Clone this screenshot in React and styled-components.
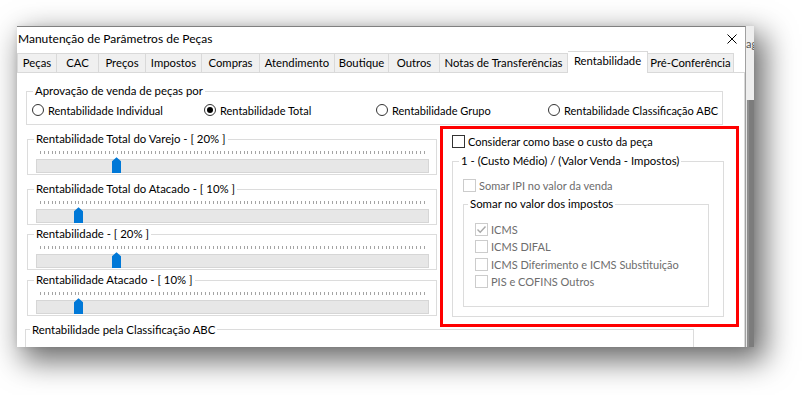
import React from "react";
import styled, { createGlobalStyle } from "styled-components";

const GlobalStyle = createGlobalStyle`
  *, *::before, *::after { box-sizing: border-box; }
  html, body { margin: 0; padding: 0; background: #ffffff; }
  body {
    font-family: "Segoe UI", Lato, "Noto Sans", sans-serif;
    font-size: 11px;
    color: #000;
  }
`;

const Page = styled.div`
  width: 802px;
  height: 395px;
  overflow: hidden;
  padding: 26px 0 0 17px;
  background: #fff;
`;

const Shot = styled.div`
  display: flex;
  width: 737px;
  height: 321px;
  box-shadow: 8px 11px 28px 3px rgba(0, 0, 0, 0.58), 0 0 6px rgba(0, 0, 0, 0.08);
`;

const Window = styled.div`
  width: 729px;
  height: 321px;
  flex: none;
  display: flex;
  flex-direction: column;
  overflow: hidden;
  background: #fff;
  border-top: 1px solid #808080;
  border-right: 1px solid #a0a0a0;
`;

const TitleBar = styled.div`
  height: 25px;
  flex: none;
  display: flex;
  align-items: center;
  justify-content: space-between;
  padding: 0 8px 2px 1px;
  font-size: 12px;
  white-space: nowrap;
`;

const CloseIcon = styled.svg`
  width: 10px;
  height: 10px;
  display: block;
`;

const Backdrop = styled.div`
  width: 8px;
  height: 321px;
  flex: none;
  display: flex;
  flex-direction: column;
  overflow: hidden;
`;

const BackdropTop = styled.div`
  height: 74px;
  flex: none;
  background: #eeeeee;
  color: #555;
  font-size: 11px;
  padding-top: 11px;
  white-space: nowrap;
`;

const BackdropBar = styled.div`
  flex: 1;
  background: linear-gradient(to right, #e4e4e4 0 1px, #8e8e8e 1px 3px, #7c7c7c 3px);
`;

const TabStrip = styled.div`
  height: 20px;
  flex: none;
  display: flex;
  align-items: flex-end;
  position: relative;
  z-index: 1;
`;

const Tab = styled.div`
  flex: none;
  width: ${(p) => p.$w}px;
  height: ${(p) => (p.$active ? 22 : 19)}px;
  margin-bottom: ${(p) => (p.$active ? -1 : 0)}px;
  padding-bottom: ${(p) => (p.$active ? 4 : 1)}px;
  border-top: 1px solid #d9d9d9;
  border-right: 1px solid #d9d9d9;
  border-left: ${(p) => (p.$first ? "1px solid #d9d9d9" : "none")};
  background: ${(p) => (p.$active ? "#ffffff" : "#f0f0f0")};
  display: flex;
  align-items: center;
  justify-content: center;
  font-size: 11.3px;
  white-space: nowrap;
`;

const Panel = styled.div`
  flex: 1;
  border-top: 1px solid #d9d9d9;
  border-right: 1px solid #d9d9d9;
  padding: 11px 0 0 9px;
`;

const Fieldset = styled.fieldset`
  margin: 0;
  padding: 0;
  min-width: 0;
  border: 1px solid #dcdcdc;
  width: ${(p) => p.$w}px;
  margin-top: ${(p) => p.$mt || 0}px;
  margin-left: ${(p) => p.$ml || 0}px;
  height: ${(p) => (p.$h ? `${p.$h}px` : "auto")};
  flex: none;
`;

const Legend = styled.legend`
  padding: 0 2px;
  margin-left: ${(p) => p.$indent}px;
  line-height: 14px;
  height: 14px;
  font-size: 11.4px;
  white-space: nowrap;
  color: #000;
`;

const RadioGrid = styled.div`
  display: grid;
  grid-template-columns: repeat(4, 172px);
  padding: 5px 0 7px 5px;
`;

const RadioItem = styled.label`
  display: flex;
  align-items: center;
  gap: 4px;
  height: 14px;
  white-space: nowrap;
`;

const RadioCircle = styled.span`
  width: 12px;
  height: 12px;
  border-radius: 50%;
  border: 1px solid #333;
  background: #fff;
  flex: none;
  display: flex;
  align-items: center;
  justify-content: center;
  &::after {
    content: "";
    width: 6px;
    height: 6px;
    border-radius: 50%;
    background: #000;
    display: ${(p) => (p.$on ? "block" : "none")};
  }
`;

const BodyRow = styled.div`
  display: flex;
  align-items: flex-start;
  margin-top: 7px;
`;

const LeftCol = styled.div`
  width: 410px;
  margin-left: 1px;
  display: flex;
  flex-direction: column;
`;

const SliderBody = styled.div`
  padding: 0 7px 1px 8px;
`;

const Ticks = styled.div`
  width: 385px;
  height: 3px;
  margin: 5px 0 0 4px;
  background: repeating-linear-gradient(
    to right,
    #a4a4a4 0 1px,
    transparent 1px 3.84px
  );
`;

const Track = styled.div`
  position: relative;
  margin-top: 5px;
  height: 14px;
  background: #e7e7e7;
  border: 1px solid #d6d6d6;
`;

const Thumb = styled.svg`
  position: absolute;
  top: -3px;
  width: 9px;
  height: 16px;
  display: block;
`;

const RightCol = styled.div`
  position: relative;
  width: 299px;
  margin-left: 3px;
  padding: 3px 0 0 12px;
`;

const Highlight = styled.div`
  position: absolute;
  left: 0;
  top: -6px;
  width: 299px;
  height: 201px;
  border: 3px solid #ff0000;
  pointer-events: none;
`;

const GroupBody = styled.div`
  padding: ${(p) => p.$pad};
  display: flex;
  flex-direction: column;
  gap: ${(p) => p.$gap || 0}px;
`;

const CheckRow = styled.label`
  display: flex;
  align-items: center;
  gap: 3px;
  height: 13px;
  margin-top: ${(p) => p.$mt || 0}px;
  white-space: nowrap;
  color: ${(p) => (p.$disabled ? "#6d6d6d" : "#000")};
`;

const Box = styled.span`
  width: 13px;
  height: 13px;
  flex: none;
  border: 1px solid ${(p) => (p.$disabled ? "#cccccc" : "#333333")};
  background: #fff;
  display: flex;
  align-items: center;
  justify-content: center;
`;

const CheckMark = styled.svg`
  width: 11px;
  height: 11px;
  display: block;
`;

const tabs = [
  { label: "Peças", w: 40 },
  { label: "CAC", w: 42 },
  { label: "Preços", w: 47 },
  { label: "Impostos", w: 56 },
  { label: "Compras", w: 58 },
  { label: "Atendimento", w: 75 },
  { label: "Boutique", w: 54 },
  { label: "Outros", w: 51 },
  { label: "Notas de Transferências", w: 128 },
  { label: "Rentabilidade", w: 80, active: true },
  { label: "Pré-Conferência", w: 86 },
];

const radios = [
  { label: "Rentabilidade Individual" },
  { label: "Rentabilidade Total", on: true },
  { label: "Rentabilidade Grupo" },
  { label: "Rentabilidade Classificação ABC" },
];

const sliders = [
  { label: "Rentabilidade Total do Varejo - [ 20% ]", v: 20, mt: 0 },
  { label: "Rentabilidade Total do Atacado - [ 10% ]", v: 10, mt: 7 },
  { label: "Rentabilidade - [ 20% ]", v: 20, mt: 2 },
  { label: "Rentabilidade Atacado - [ 10% ]", v: 10, mt: 3 },
];

const taxes = [
  { label: "ICMS", checked: true },
  { label: "ICMS DIFAL" },
  { label: "ICMS Diferimento e ICMS Substituição" },
  { label: "PIS e COFINS Outros" },
];

function Checkbox({ label, checked, disabled, mt }) {
  return (
    <CheckRow $disabled={disabled} $mt={mt}>
      <Box $disabled={disabled}>
        {checked && (
          <CheckMark viewBox="0 0 11 11">
            <polyline
              points="1.5,5.5 4.2,8.2 9.5,2.5"
              fill="none"
              stroke={disabled ? "#a8a8a8" : "#000"}
              strokeWidth="1.4"
            />
          </CheckMark>
        )}
      </Box>
      <span>{label}</span>
    </CheckRow>
  );
}

function Slider({ label, v, mt }) {
  return (
    <Fieldset $w={410} $mt={mt}>
      <Legend $indent={6}>{label}</Legend>
      <SliderBody>
        <Ticks />
        <Track>
          <Thumb viewBox="0 0 9 16" style={{ left: `${3 - 4.5 + (v / 100) * 384}px` }}>
            <path d="M0 4.2 L4.5 0.3 L9 4.2 V16 H0 Z" fill="#0078d7" />
          </Thumb>
        </Track>
      </SliderBody>
    </Fieldset>
  );
}

export default function App() {
  return (
    <>
      <GlobalStyle />
      <Page>
        <Shot>
          <Window>
            <TitleBar>
              <span>Manutenção de Parâmetros de Peças</span>
              <CloseIcon viewBox="0 0 10 10">
                <path d="M0.5 0.5 L9.5 9.5 M9.5 0.5 L0.5 9.5" stroke="#000" strokeWidth="1" />
              </CloseIcon>
            </TitleBar>
            <TabStrip>
              {tabs.map((t, i) => (
                <Tab key={t.label} $w={t.w} $active={t.active} $first={i === 0}>
                  {t.label}
                </Tab>
              ))}
            </TabStrip>
            <Panel>
              <Fieldset $w={697}>
                <Legend $indent={6}>Aprovação de venda de peças por</Legend>
                <RadioGrid>
                  {radios.map((r) => (
                    <RadioItem key={r.label}>
                      <RadioCircle $on={r.on} />
                      <span>{r.label}</span>
                    </RadioItem>
                  ))}
                </RadioGrid>
              </Fieldset>
              <BodyRow>
                <LeftCol>
                  {sliders.map((s) => (
                    <Slider key={s.label} {...s} />
                  ))}
                </LeftCol>
                <RightCol>
                  <Checkbox label="Considerar como base o custo da peça" />
                  <Fieldset $w={272} $mt={6}>
                    <Legend $indent={6}>1 - (Custo Médio) / (Valor Venda - Impostos)</Legend>
                    <GroupBody $pad="0 0 9px 10px">
                      <Checkbox label="Somar IPI no valor da venda" disabled mt={11} />
                      <Fieldset $w={246} $mt={5}>
                        <Legend $indent={4}>Somar no valor dos impostos</Legend>
                        <GroupBody $pad="12px 0 18px 11px" $gap={4.3}>
                          {taxes.map((t) => (
                            <Checkbox key={t.label} label={t.label} checked={t.checked} disabled />
                          ))}
                        </GroupBody>
                      </Fieldset>
                    </GroupBody>
                  </Fieldset>
                  <Highlight />
                </RightCol>
              </BodyRow>
              <Fieldset $w={669} $mt={6} $ml={-1} $h={40}>
                <Legend $indent={4}>Rentabilidade pela Classificação ABC</Legend>
              </Fieldset>
            </Panel>
          </Window>
          <Backdrop>
            <BackdropTop>ag</BackdropTop>
            <BackdropBar />
          </Backdrop>
        </Shot>
      </Page>
    </>
  );
}
